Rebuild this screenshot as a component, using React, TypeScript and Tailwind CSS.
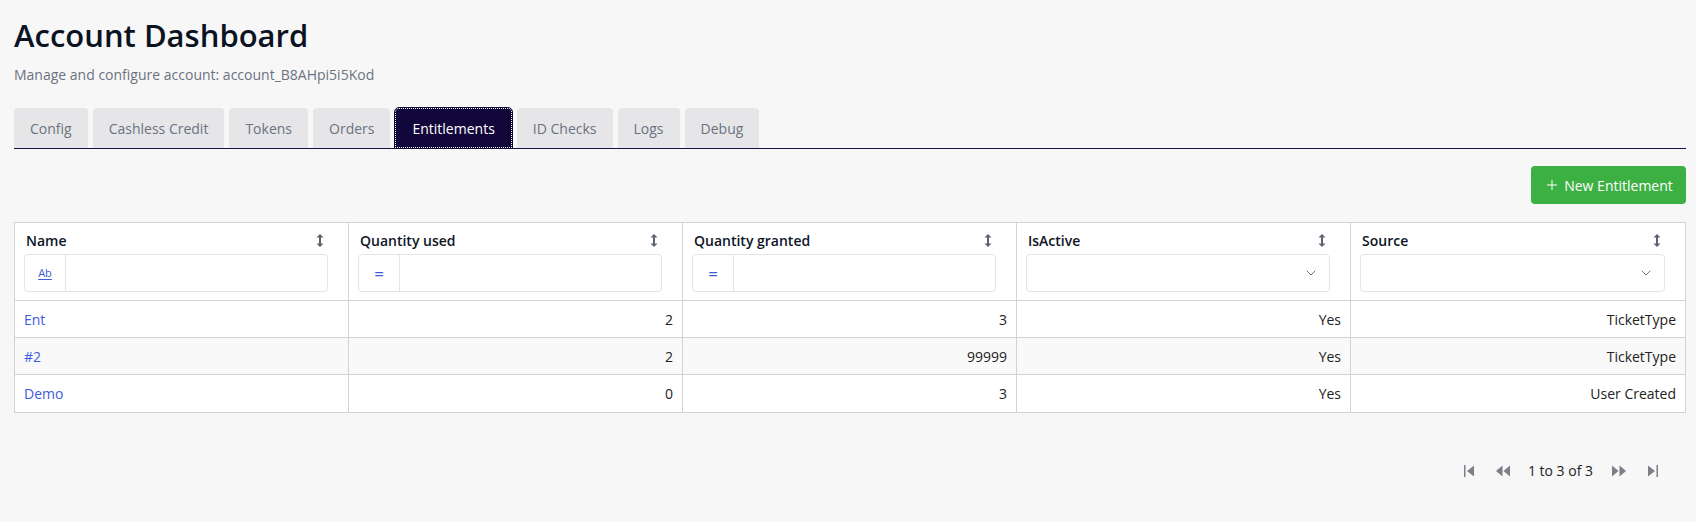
import { ChevronDown, Plus } from 'lucide-react'

const tabs = ['Config', 'Cashless Credit', 'Tokens', 'Orders', 'Entitlements', 'ID Checks', 'Logs', 'Debug']

type Row = { name: string; used: number; granted: number; active: string; source: string }

const rows: Row[] = [
  { name: 'Ent', used: 2, granted: 3, active: 'Yes', source: 'TicketType' },
  { name: '#2', used: 2, granted: 99999, active: 'Yes', source: 'TicketType' },
  { name: 'Demo', used: 0, granted: 3, active: 'Yes', source: 'User Created' },
]

function SortIcon() {
  return (
    <svg width="8" height="15" viewBox="0 0 8 15" className="text-[#5a6270]">
      <path d="M4 1 L7.5 4.5 H0.5 Z" fill="currentColor" />
      <path d="M4 14 L7.5 10.5 H0.5 Z" fill="currentColor" />
      <rect x="3" y="3" width="2" height="9" fill="currentColor" />
    </svg>
  )
}

function FilterInput({ kind }: { kind: 'text' | 'number' }) {
  return (
    <div className="flex h-[38px] rounded-[4px] border border-[#e4e4e4] bg-white">
      <div className="flex w-[41px] items-center justify-center border-r border-[#e4e4e4] text-[#3c5ce0]">
        {kind === 'text' ? (
          <span className="text-[11px] underline underline-offset-2">Ab</span>
        ) : (
          <span className="text-[17px] leading-none">=</span>
        )}
      </div>
      <div className="flex-1" />
    </div>
  )
}

function SelectInput() {
  return (
    <div className="flex h-[38px] items-center justify-end rounded-[4px] border border-[#e4e4e4] bg-white pr-[10px]">
      <ChevronDown size={16} strokeWidth={1.25} className="text-[#555]" />
    </div>
  )
}

function HeaderCell({ label, children, last }: { label: string; children: React.ReactNode; last?: boolean }) {
  return (
    <div className={`pl-[9px] pr-[20px] pt-[7px] pb-[8px] ${last ? '' : 'border-r border-[#d3d3d3]'}`}>
      <div className="flex h-[20px] items-center justify-between pl-[2px]">
        <span className="text-[14px] font-semibold text-[#0d1526]">{label}</span>
        <span className="mr-[4px]">
          <SortIcon />
        </span>
      </div>
      <div className="mt-[4px]">{children}</div>
    </div>
  )
}

function PagerIcon({ d, w }: { d: string; w: number }) {
  return (
    <svg width={w} height="12" viewBox={`0 0 ${w} 12`} className="text-[#7a7f88]">
      <path d={d} fill="currentColor" />
    </svg>
  )
}

export default function App() {
  return (
    <div
      className="min-h-[522px] bg-[#f7f7f7] pl-[14px] pr-[10px] pt-[16px]"
      style={{ fontFamily: '"Open Sans", "Noto Sans", sans-serif' }}
    >
      <h1 className="text-[31px] font-semibold leading-[38px] text-[#0b1322]">Account Dashboard</h1>
      <p className="mt-[11px] text-[14px] leading-[20px] text-[#6b7280]">
        Manage and configure account: account_B8AHpi5i5Kod
      </p>

      <div className="mt-[23px] flex gap-[5px] border-b border-[#1a0f45]">
        {tabs.map((t) => {
          const active = t === 'Entitlements'
          return (
            <div
              key={t}
              className={`flex h-[40px] items-center rounded-t-[4px] px-[16px] text-[14px] ${
                active
                  ? 'border border-dotted border-white bg-[#12073a] text-white outline outline-1 outline-[#12073a]'
                  : 'bg-[#e6e6e8] text-[#6b7280]'
              }`}
            >
              {t}
            </div>
          )
        })}
      </div>

      <div className="mt-[17px] flex justify-end">
        <button className="flex h-[38px] w-[155px] items-center justify-center gap-[4px] rounded-[4px] bg-[#3cb043] text-[14px] text-white">
          <Plus size={16} strokeWidth={1.5} />
          New Entitlement
        </button>
      </div>

      <div className="mt-[18px] border border-[#d3d3d3] bg-white">
        <div className="grid grid-cols-5 border-b border-[#d3d3d3]">
          <HeaderCell label="Name">
            <FilterInput kind="text" />
          </HeaderCell>
          <HeaderCell label="Quantity used">
            <FilterInput kind="number" />
          </HeaderCell>
          <HeaderCell label="Quantity granted">
            <FilterInput kind="number" />
          </HeaderCell>
          <HeaderCell label="IsActive">
            <SelectInput />
          </HeaderCell>
          <HeaderCell label="Source" last>
            <SelectInput />
          </HeaderCell>
        </div>
        {rows.map((r, i) => (
          <div
            key={r.name}
            className={`grid h-[37px] grid-cols-5 text-[14px] text-[#222] ${i % 2 === 1 ? 'bg-[#f9f9f9]' : 'bg-white'} ${
              i < rows.length - 1 ? 'border-b border-[#d3d3d3]' : ''
            }`}
          >
            <div className="flex items-center border-r border-[#d3d3d3] px-[9px] text-[#3c5ce0]">{r.name}</div>
            <div className="flex items-center justify-end border-r border-[#d3d3d3] px-[9px]">{r.used}</div>
            <div className="flex items-center justify-end border-r border-[#d3d3d3] px-[9px]">{r.granted}</div>
            <div className="flex items-center justify-end border-r border-[#d3d3d3] px-[9px]">{r.active}</div>
            <div className="flex items-center justify-end px-[9px]">{r.source}</div>
          </div>
        ))}
      </div>

      <div className="mt-[47px] flex items-center justify-end pr-[28px] text-[14px] text-[#222]">
        <PagerIcon w={10} d="M0 0h1.5v12H0z M10 0.5v11L3 6z" />
        <span className="ml-[21px] flex">
          <PagerIcon w={15} d="M7.5 0.5v11L1 6z M15 0.5v11L8.5 6z" />
        </span>
        <span className="ml-[18px]">1 to 3 of 3</span>
        <span className="ml-[19px] flex">
          <PagerIcon w={15} d="M0 0.5v11L6.5 6z M7.5 0.5v11L14 6z" />
        </span>
        <span className="ml-[21px] flex">
          <PagerIcon w={10} d="M0 0.5v11L7 6z M8.5 0H10v12H8.5z" />
        </span>
      </div>
    </div>
  )
}
